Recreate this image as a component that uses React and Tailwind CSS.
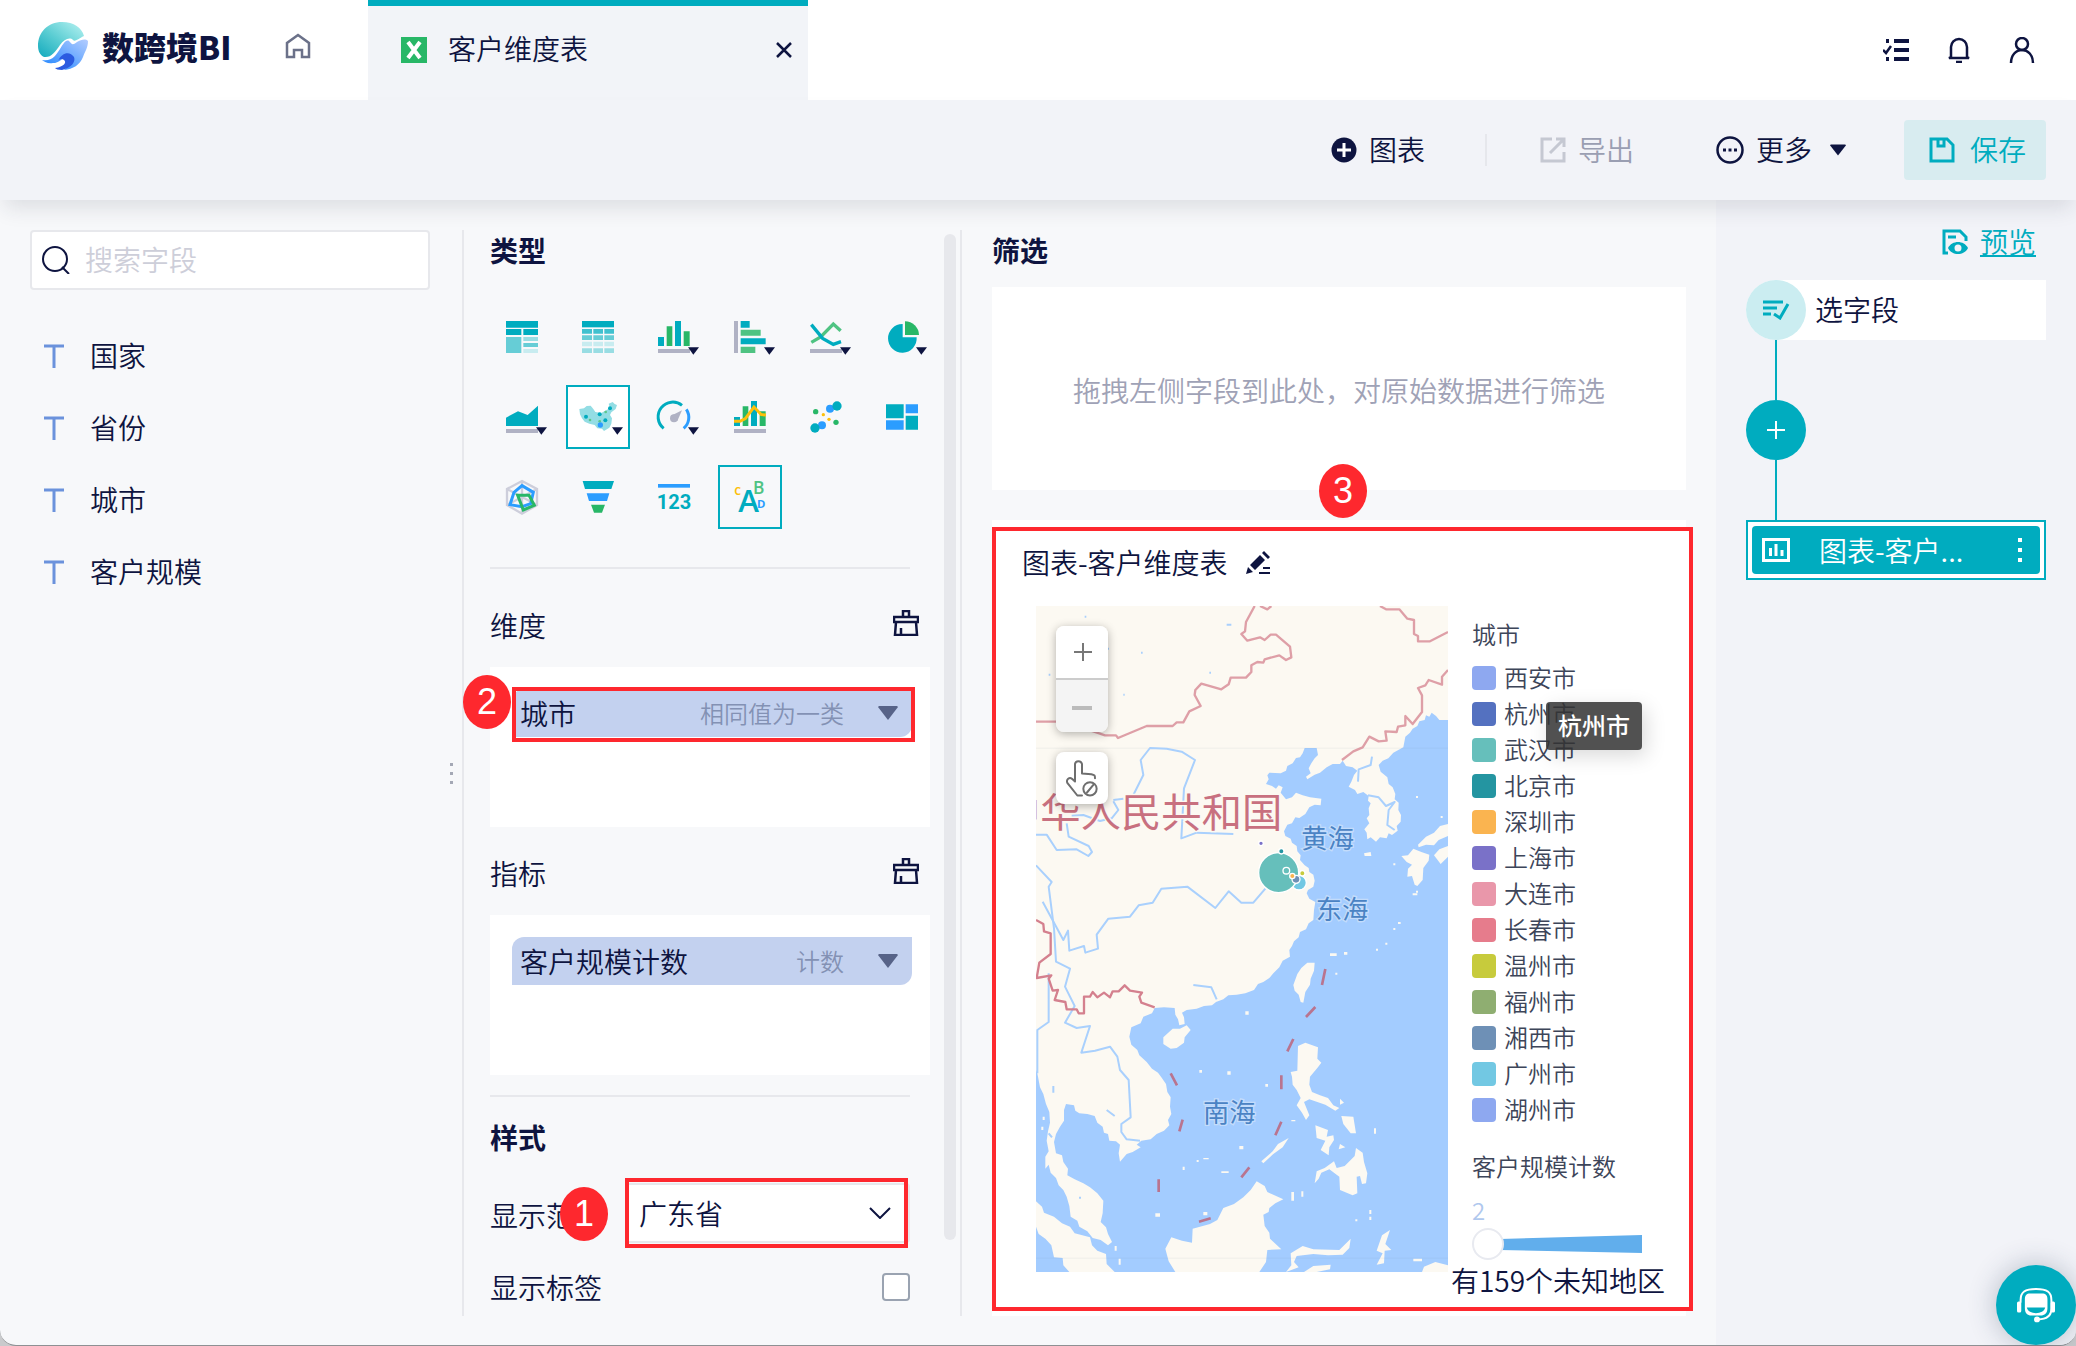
import { useState } from 'react'

const TEAL = '#00acbf'
const GREEN = '#28b767'
const BLUE = '#2b9dff'
const YELLOW = '#fdbf0a'
const GRAY = '#b0b2c4'

const FIELDS = ['国家', '省份', '城市', '客户规模']

const LEGEND = [
  { name: '西安市', color: '#8ea8f0' },
  { name: '杭州市', color: '#5471c0' },
  { name: '武汉市', color: '#66bfbb' },
  { name: '北京市', color: '#2495a1' },
  { name: '深圳市', color: '#fab450' },
  { name: '上海市', color: '#7a71c8' },
  { name: '大连市', color: '#e997aa' },
  { name: '长春市', color: '#e67c8c' },
  { name: '温州市', color: '#c7cb3c' },
  { name: '福州市', color: '#8fae71' },
  { name: '湘西市', color: '#6e90b6' },
  { name: '广州市', color: '#72c8e3' },
  { name: '湖州市', color: '#8ea8f0' },
]

const CHARTS = [
  {
    label: '交叉表',
    icon: (
      <>
        <path fill={TEAL} d="M0 0h96v20H0zM0 24h46v18H0zM52 24h44v18H52z" />
        <path fill="#66cdd6" d="M0 48h46v48H0zM52 66h44v12H52z" />
        <path fill="#99dde3" d="M52 48h44v12H52z" />
        <path fill="#c8ecf0" d="M52 84h44v12H52z" />
      </>
    ),
  },
  {
    label: '明细表',
    icon: (
      <>
        <path fill={TEAL} d="M0 0h96v19H0z" />
        <path fill="#40c1cf" d="M0 24h30v14H0zM34 24h29v14H34zM67 24h29v14H67z" />
        <path fill="#66cdd6" d="M0 43h30v14H0zM34 43h29v14H34zM67 43h29v14H67z" />
        <path fill="#c8ecf0" d="M0 62h30v14H0zM34 62h29v14H34zM67 62h29v14H67z" />
        <path fill="#99dde3" d="M0 82h30v14H0zM34 82h29v14H34zM67 82h29v14H67z" />
      </>
    ),
  },
  {
    label: '柱状图',
    more: true,
    icon: (
      <>
        <path fill={TEAL} d="M0 48h18v27H0zM51 0h18v75H51z" />
        <path fill={GREEN} d="M26 16h17v59H26zM77 31h18v44H77z" />
        <path fill={GRAY} d="M0 84h96v12H0z" />
      </>
    ),
  },
  {
    label: '条形图',
    more: true,
    icon: (
      <>
        <path fill={GRAY} d="M0 0h12v96H0z" />
        <path fill={TEAL} d="M20 0h27v20H20zM20 52h75v18H20z" />
        <path fill="#4fc382" d="M20 26h60v18H20zM20 77h44v19H20z" />
      </>
    ),
  },
  {
    label: '折线图',
    more: true,
    icon: (
      <>
        <path fill="none" stroke="#4fc382" strokeWidth="10" d="M4 64L32 48L70 9L92 29" />
        <path fill="none" stroke={TEAL} strokeWidth="10" d="M4 11L38 52L70 70L93 62" />
        <path fill={GRAY} d="M0 84h96v12H0z" />
      </>
    ),
  },
  {
    label: '饼图',
    more: true,
    icon: (
      <>
        <path fill={TEAL} d="M50 9V49H92A43 43 0 1 1 50 9Z" />
        <path fill={GREEN} d="M57 1A42 42 0 0 1 99 42H57Z" />
      </>
    ),
  },
  {
    label: '面积图',
    more: true,
    icon: (
      <>
        <path fill={TEAL} d="M0 50L36 31L65 42L96 14V75H0Z" />
        <path fill={GRAY} d="M0 84h96v12H0z" />
      </>
    ),
  },
  {
    label: '地图',
    more: true,
    active: true,
    filled: true,
    icon: (
      <>
        <path fill="#93dde4" d="M-8 24L6 22L14 15L26 14L34 24L40 33L58 36L72 28L84 22L80 8L92 3L98 9L105 12L101 24L88 34L84 42L90 52L88 68L82 80L66 90L60 83L46 82L38 72L22 68L8 62L0 52L-6 40Z" />
        <g fill={TEAL}>
          <circle cx="12" cy="47" r="6" />
          <circle cx="53" cy="40" r="6" />
          <circle cx="84" cy="22" r="6" />
          <circle cx="70" cy="58" r="6" />
        </g>
        <g fill="#5cc68b">
          <circle cx="24" cy="57" r="4" />
          <circle cx="71" cy="33" r="4" />
          <circle cx="53" cy="61" r="4" />
        </g>
        <circle cx="55" cy="72" r="8" fill={BLUE} />
      </>
    ),
  },
  {
    label: '仪表盘',
    more: true,
    icon: (
      <>
        <path fill="none" stroke={TEAL} strokeWidth="9" d="M17 82A43 43 0 0 1 72 13" />
        <path fill="none" stroke={BLUE} strokeWidth="9" d="M85 25A43 43 0 0 1 77 82" />
        <circle cx="48" cy="52" r="12" fill={GRAY} />
        <path fill={GRAY} d="M38 45L72 28L58 60Z" />
      </>
    ),
  },
  {
    label: '组合图',
    icon: (
      <>
        <path fill={TEAL} d="M0 48h18v27H0zM51 0h18v75H51z" />
        <path fill={GREEN} d="M26 16h17v59H26zM77 31h18v44H77z" />
        <path fill="none" stroke={YELLOW} strokeWidth="9" d="M0 61L18 61L34 53L60 18L82 41L96 42" />
        <path fill={GRAY} d="M0 84h96v12H0z" />
      </>
    ),
  },
  {
    label: '散点图',
    icon: (
      <>
        <circle cx="17" cy="32" r="8" fill={GREEN} />
        <circle cx="78" cy="64" r="8" fill={GREEN} />
        <circle cx="40" cy="41" r="5" fill={YELLOW} />
        <circle cx="57" cy="55" r="5" fill={YELLOW} />
        <circle cx="60" cy="23" r="12" fill={BLUE} />
        <circle cx="36" cy="73" r="12" fill={BLUE} />
        <circle cx="81" cy="15" r="14" fill={TEAL} />
        <circle cx="15" cy="81" r="14" fill={TEAL} />
      </>
    ),
  },
  {
    label: '矩形树图',
    icon: (
      <>
        <path fill={TEAL} d="M0 10h53v42H0zM59 44h37v42H59z" />
        <path fill={BLUE} d="M59 10h37v27H59zM0 58h53v28H0z" />
      </>
    ),
  },
  {
    label: '雷达图',
    icon: (
      <>
        <path fill="none" stroke="#cdcedb" strokeWidth="7" d="M48 0L93 24V72L48 98L3 72V24ZM48 0V98M3 24L93 72M93 24L3 72" />
        <path fill="none" stroke={BLUE} strokeWidth="9" d="M48 14L82 34L74 68L48 77L12 71L24 34Z" />
        <path fill="none" stroke={GREEN} strokeWidth="9" d="M35 43H69L85 73L52 87Z" />
      </>
    ),
  },
  {
    label: '漏斗图',
    icon: (
      <>
        <path fill={TEAL} d="M2 0H96L88 24H9Z" />
        <path fill={BLUE} d="M14 37H82L75 60H21Z" />
        <path fill={GREEN} d="M27 71H69L60 95H36Z" />
      </>
    ),
  },
  {
    label: '指标卡',
    icon: (
      <>
        <path fill={BLUE} d="M0 9h96v11H0z" />
        <text x="48" y="84" textAnchor="middle" fill={TEAL} fontSize="60" fontWeight="700" className="font-[Roboto,sans-serif]">123</text>
      </>
    ),
  },
  {
    label: '词云',
    active: true,
    icon: (
      <>
        <text x="1" y="41" fill={YELLOW} fontSize="32" fontWeight="700" className="font-['Open_Sans',sans-serif]">C</text>
        <text x="13" y="94" fill={TEAL} fontSize="94" fontWeight="600" className="font-['Open_Sans',sans-serif]">A</text>
        <text x="57" y="40" fill="#4fc382" fontSize="52" fontWeight="600" className="font-['Open_Sans',sans-serif]">B</text>
        <text x="69" y="80" fill={BLUE} fontSize="34" fontWeight="700" className="font-['Open_Sans',sans-serif]">D</text>
      </>
    ),
  },
]

function Logo() {
  return (
    <svg viewBox="0 0 50 50" className="size-[50px]" aria-hidden="true">
      <defs>
        <linearGradient id="sky" x1="0" y1="1" x2="1" y2="0">
          <stop offset="0" stopColor="#12a9bd" />
          <stop offset="0.45" stopColor="#58ccd2" />
          <stop offset="1" stopColor="#b9f3f2" />
        </linearGradient>
        <linearGradient id="wave" x1="0" y1="1" x2="1" y2="0">
          <stop offset="0" stopColor="#1b83ff" />
          <stop offset="1" stopColor="#b4cdff" />
        </linearGradient>
      </defs>
      <path fill="url(#sky)" d="M24 1C36 1 44 7 46 15C40 18 37 21 35 19C32 16 26 18 22 24C17 31 13 37 6 36C2 34 0 30 0 25C0 11 10 1 24 1Z" />
      <path fill="url(#wave)" d="M4 39C14 41 18 34 22 28C25 23 28 18 31 20C34 23 34 25 39 21C43 19 47 17 50 20C50 27 47 30 45 36C42 44 35 48 26 49C32 44 33 39 29 37C25 35 22 42 15 42C10 43 7 41 4 39Z" />
      <path fill="#2b5be0" d="M20 40C24 31 32 30 36 36C38 41 33 47 24 49C20 49 18 48 17 47C26 46 29 41 26 39C24 37 21 38 20 40Z" />
    </svg>
  )
}

function Badge({ children, className }) {
  return (
    <span className={`absolute z-20 flex h-[54px] w-12 items-center justify-center rounded-[50%] bg-[#fe282e] font-['Liberation_Sans',Arial,sans-serif] text-4xl font-normal text-white ${className}`}>
      {children}
    </span>
  )
}

function BrushIcon() {
  return (
    <svg viewBox="0 0 26 26" className="size-[26px]" fill="none" stroke="#0e1440" strokeWidth="2.500" aria-hidden="true">
      <path d="M10 7V1H16V7M1 7H25V12H1ZM3 12L2 25H24L23 12M8 25V18" />
    </svg>
  )
}

function Triangle({ className }) {
  return (
    <svg viewBox="0 0 20 14" className={className} fill="currentColor" aria-hidden="true">
      <path d="M1 0H19L20 1L10 14L0 1Z" />
    </svg>
  )
}

function FieldChip({ name, mode }) {
  return (
    <button className="flex h-12 w-full items-center rounded-tl-xl rounded-br-xl bg-[#c3d1ef] pl-2 pr-3.5 text-left">
      <span className="flex-1">{name}</span>
      <span className="mr-[34px] text-2xl text-[#8391b4]">{mode}</span>
      <Triangle className="h-3.5 w-5 text-[#576388]" />
    </button>
  )
}

function DropZone({ title, children }) {
  return (
    <section className="pr-[30px]">
      <div className="flex h-10 items-center justify-between pr-[11px]">
        <h3>{title}</h3>
        <button className="pb-1" aria-label={`清空${title}`}><BrushIcon /></button>
      </div>
      <div className="mt-[22px] h-40 bg-white px-[18px] pt-[22px] pl-[22px]">{children}</div>
    </section>
  )
}

function MapView() {
  return (
    <svg viewBox="168 288 1236 1998" preserveAspectRatio="xMidYMid slice" className="h-full w-full" role="img" aria-label="城市地图">
      <rect x="168" y="288" width="1236" height="1998" fill="#a3ccff" />
      <g fill="#fcf9f2">
        {/* mainland */}
        <path d="M168 288H1404V630L1378 630L1368 618L1355 608L1348 620L1338 616L1334 630L1318 634L1312 648L1298 656L1290 668L1276 680L1270 712L1240 728L1225 745L1208 752L1196 765L1202 785L1222 802L1226 822L1238 832L1246 852L1244 868L1256 878L1255 900L1263 915L1262 935L1250 948L1253 962L1236 975L1226 970L1220 985L1200 982L1188 995L1172 982L1162 988L1160 968L1153 958L1168 940L1160 925L1168 915L1166 895L1172 880L1164 872L1166 858L1150 846L1132 852L1125 840L1106 830L1114 815L1122 795L1132 782L1118 772L1098 768L1088 752L1080 762L1058 762L1040 772L1020 788L1004 794L982 808L978 800L992 790L986 775L994 760L1004 745L1014 735L1010 714H974L968 730L960 742L948 744L938 760L922 768L918 782L902 790L868 788L862 796L866 808L858 822L876 828L888 836L896 826L908 832L902 848L918 868L936 862L948 848L968 856L990 862L1024 866L1022 886L1004 884L988 892L976 912L958 924L946 922L936 940L922 944L912 964L916 978L932 986L936 998L950 1008L952 1024L962 1036L960 1050L974 1066L986 1074L988 1086L1000 1094L1004 1112L1000 1130L984 1140L980 1150L988 1166L1006 1176L1002 1200L1000 1230L986 1240L978 1258L960 1266L956 1282L942 1294L936 1308L928 1320L930 1340L908 1352L898 1372L880 1390L868 1404L850 1416L834 1422L822 1440L796 1450L770 1454L745 1456L730 1468L708 1476L696 1486L672 1488L650 1496L620 1500L606 1508L612 1522L614 1542L598 1546L594 1528L586 1514L584 1494L552 1492L524 1494L516 1510L490 1520L482 1540L454 1552L448 1580L454 1604L472 1620L478 1636L500 1656L516 1676L534 1688L544 1702L558 1722L562 1746L572 1762L570 1790L574 1812L564 1830L568 1846L552 1862L530 1872L512 1888L484 1892L470 1904L482 1912L458 1926L440 1932L420 1955L416 1930L420 1904L408 1894L388 1892L384 1872L372 1868L368 1850L352 1838L344 1818L322 1812L298 1810L286 1802L282 1786L258 1782L252 1800L252 1832L240 1850L228 1872L222 1896L228 1930L246 1936L250 1956L264 1976L262 1996L284 2008L310 2020L330 2032L352 2050L370 2072L368 2110L362 2136L378 2152L384 2172L396 2196L384 2206L362 2190L338 2184L322 2164L298 2150L292 2132L272 2120L268 2088L260 2060L250 2040L236 2026L228 2004L212 1988L206 1964L196 1976L196 1940L206 1924L200 1892L204 1864L210 1838L208 1806L198 1782L190 1752L180 1732L172 1690L168 1680Z" />
        {/* Hainan, Taiwan, Jeju */}
        <path d="M550 1582L578 1556L600 1556L620 1546L632 1560L614 1582L612 1598L590 1614L572 1616L550 1602Z" />
        <path d="M940 1425L952 1392L964 1374L982 1358L1004 1358L1002 1382L992 1406L990 1424L976 1446L970 1478L962 1476L956 1454L944 1442Z" />
        <path d="M1152 1030L1172 1026L1174 1038L1154 1038Z" />
        {/* Japan */}
        <path d="M1264 1038L1284 1036L1300 1016L1324 1026L1348 1034L1346 1052L1330 1074L1328 1110L1312 1128L1304 1124L1296 1098L1282 1100L1284 1076L1296 1064L1280 1056Z" />
        <path d="M1314 1004L1338 980L1362 968L1380 948L1404 942V978L1376 990L1362 1006L1338 1004L1316 1012Z" />
        <path d="M1362 1036L1378 1018L1404 1008V1040L1382 1062Z" />
        {/* Philippines */}
        <path d="M954 1608L976 1598L1014 1612L1012 1646L1024 1658L1012 1674L1000 1688L990 1700L988 1724L996 1746L1020 1756L1044 1764L1060 1786L1078 1794L1066 1802L1036 1784L1012 1776L988 1768L972 1776L988 1816L978 1830L966 1808L950 1786L962 1764L950 1740L938 1724L936 1700L932 1686L952 1682Z" />
        <path d="M1006 1846L1044 1860L1040 1880L1060 1876L1062 1890L1048 1912L1046 1936L1022 1920L1036 1892L1010 1884Z" />
        <path d="M1084 1818L1120 1820L1128 1870L1112 1870L1090 1842Z" />
        <path d="M1080 1902L1096 1912L1076 1918ZM1080 1766L1092 1778L1080 1784Z" />
        <path d="M1004 2020L1010 1984L1034 1974L1062 1954L1070 1974L1094 1968L1124 1938L1128 1914L1148 1928L1152 1956L1162 1990L1158 2020L1146 2022L1140 1998L1130 2000L1132 2050L1118 2056L1080 2040L1078 2000L1048 1978L1024 1988L1016 2006Z" />
        <path d="M844 1954L878 1924L894 1902L926 1884L908 1912L880 1932L850 1960Z" />
        {/* Sumatra, Borneo, Sulawesi and the islands around */}
        <path d="M168 2074L186 2090L192 2108L222 2120L246 2140L270 2150L284 2170L330 2182L336 2206L352 2222L378 2232L380 2262L404 2286H268L250 2266L248 2244L222 2242L214 2206L196 2186L176 2172L168 2150Z" />
        <path d="M638 2156L690 2142L712 2130L730 2094L762 2082L790 2062L812 2040L830 2014L854 2028L862 2046L910 2068L886 2080L868 2094L866 2106L850 2114L854 2148L868 2168L870 2186L904 2218L862 2220L858 2256L838 2286H586L566 2254L556 2216L574 2182L606 2192L636 2198Z" />
        <path d="M918 2286L934 2266L932 2230L968 2208L1000 2218L1078 2220L1112 2186L1108 2214L1088 2234L1044 2236L1000 2232L950 2238L942 2256L956 2272Z" />
        <path d="M972 2286L1000 2268L1052 2264L1050 2278L1010 2286ZM1326 2286L1332 2270L1366 2256L1404 2266V2286ZM1300 2246H1326V2254H1300Z" />
        <path d="M1230 2160L1206 2176L1190 2222L1208 2230L1190 2264L1212 2260L1214 2222L1234 2220L1216 2202Z" />
        <path d="M1050 1330h20v8h-20zM1092 1326h10v8h-10zM1188 1316h6v6h-6zM1216 1298h6v6h-6zM1240 1254h6v6h-6zM1254 1236h8v6h-8zM1066 1388h6v6h-6zM796 1504h10v10h-10zM742 1684h10v10h-10zM658 1680h8v8h-8zM856 1722h8v8h-8zM778 1908h12v10h-12zM724 1984h22v5h-22zM650 1950h6v6h-6zM670 1944h16v4h-16zM526 2110h14v10h-14zM670 2106h12v10h-12zM934 2046h8v26h-8zM964 2044h6v16h-6zM1168 2100h6v12h-6zM1168 2120h6v10h-6zM608 1970h6v10h-6zM404 2208h6v14h-6zM416 2246h6v18h-6zM1126 2128h6v6h-6zM934 1830h12v4h-12zM1240 1060h6v6h-6zM1298 1150h14v6h-14zM1308 1142h6v6h-6zM1382 918h6v6h-6zM1308 858h6v6h-6zM1182 1855h6v16h-6zM188 1820h6v10h-6zM184 1850h6v10h-6z" />
      </g>
      <path d="M168 714.500H1404M168 2244.500H1404" stroke="#7b8ba0" strokeOpacity="0.15" strokeWidth="2" />

      {/* rivers and lakes */}
      <g fill="none" stroke="#a9d0fd" strokeWidth="6" strokeLinejoin="round">
        <path d="M460 855L490 795L482 750L510 714L560 716L605 725L645 750L612 835L604 985L650 968L760 972" />
        <path d="M168 974H200L230 1020L290 1018L325 1038L336 1026L326 1008L266 980L260 940M400 870L430 866M400 874L415 900L395 925L360 933L310 915L275 917" />
        <path d="M168 1066L215 1116L206 1130L222 1255L228 1355L270 1376L255 1430L284 1488L255 1538L290 1554L330 1548L304 1628L345 1622L390 1610L412 1640L420 1680L446 1710L452 1822L424 1842L424 1866L440 1888L480 1892" />
        <path d="M188 1175L250 1290L264 1262L268 1322L312 1308L316 1328L354 1316L350 1274L385 1226L450 1220L476 1186L518 1178L544 1136L622 1130L706 1194L746 1144L784 1178H820L856 1136" />
        <path d="M206 1390V1536L172 1560V1690M640 1425L694 1432L710 1468M1134 815L1136 778L1172 765L1176 740M1164 856L1196 862L1218 888L1244 876L1226 900L1222 945L1244 960" />
        <path d="M740 344h14M314 320h5M483 428h5M688 488h5M206 494h5M430 554h4M384 416h3M220 1728v20M380 1800l24 18M206 1870l10 12M300 2060v6" />
      </g>

      {/* borders */}
      <g fill="none" stroke="#d4808e" strokeWidth="7" strokeLinejoin="round">
        <path strokeOpacity="0.75" d="M168 635H240L340 664L375 676H408L414 684L500 648H578L590 637H610L628 604L662 588L644 555L646 540L664 521L724 538L746 523L752 503H798L814 486V466L832 456L850 458L854 448L898 436L918 450L934 442L930 410L888 374H872L854 390L840 382L802 392L784 372L795 364L798 336L824 288" />
        <path strokeOpacity="0.75" d="M840 288L862 298L874 288M1200 288L1218 298H1258L1282 326L1302 330V372L1314 378V394H1350L1404 366M1404 480L1386 500V524L1346 510L1336 526L1314 534L1326 556V606L1298 642L1276 618V646L1254 650L1250 666L1216 664L1220 692L1196 694L1168 680L1148 712L1120 724L1086 750" />
        <path d="M168 1230L190 1242L192 1264L212 1270V1332L178 1358L170 1404L214 1396L206 1406L218 1442L234 1440L224 1470L256 1476L260 1498H290L296 1510H312V1460H330L338 1446L352 1462L372 1448L390 1462L398 1444H416L434 1426L450 1442L486 1448L478 1460L484 1478L524 1492" />
      </g>
      <g stroke="#b9748f" strokeWidth="8">
        <path d="M1036 1377L1026 1425M1006 1491L978 1521M940 1587L922 1624M904 1696V1738M904 1835L886 1876M808 1972L784 2002M692 2125L657 2135M572 1690L591 1726M608 1829L598 1864M536 2008V2046" />
      </g>

      {/* place names */}
      <g className="font-['Noto_Sans_CJK_SC',sans-serif] font-normal" paintOrder="stroke" strokeWidth="8">
        <text x="60" y="951" fontSize="121" fill="#c8707f" stroke="#fcf9f2">中华人民共和国</text>
        <g fontSize="79" fill="#4a83c4" stroke="#c3dcfb">
          <text x="964" y="1015">黄海</text>
          <text x="1007" y="1227">东海</text>
          <text x="669" y="1835">南海</text>
        </g>
      </g>

      {/* city bubbles */}
      <g stroke="#fff" strokeWidth="4">
        <circle cx="957" cy="1118" r="22" fill="#72c8e3" />
        <circle cx="896" cy="1088" r="60" fill="#66bfbb" />
        <circle cx="919" cy="1082" r="10" fill="#66bfbb" />
        <circle cx="948" cy="1108" r="12" fill="#6e90b6" />
        <circle cx="937" cy="1098" r="8" fill="#fab450" />
        <circle cx="904" cy="1024" r="8" fill="#2495a1" />
        <circle cx="843" cy="1000" r="7" fill="#7a71c8" />
        <circle cx="967" cy="1090" r="8" fill="#c7cb3c" />
      </g>
    </svg>
  )
}

function Header() {
  return (
    <header className="flex h-[100px] items-center bg-white">
      <div className="flex w-[368px] items-center pb-2 pl-[38px]">
        <Logo />
        <span className="ml-3.5 text-[32px] leading-10 font-black">数跨境BI</span>
        <button className="ml-auto mr-[57px]" aria-label="首页">
          <svg viewBox="0 0 26 26" className="size-[26px]" fill="none" stroke="#6b7189" strokeWidth="2.500" aria-hidden="true">
            <path d="M2 24V10L13 2L24 10V24H17V17H9V24Z" />
          </svg>
        </button>
      </div>
      <div className="flex h-full w-[440px] items-center border-t-[6px] border-[#00acbf] bg-[#f2f4f8] pb-1.5 pr-4 pl-[33px]">
        <svg viewBox="0 0 26 26" className="size-[26px]" aria-hidden="true">
          <path fill="#28b767" d="M0 0H26V26H0Z" />
          <path fill="none" stroke="#fff" strokeWidth="4" d="M7 5L19 21M19 5L7 21" />
        </svg>
        <span className="ml-[21px] flex-1 pb-1">客户维度表</span>
        <button aria-label="关闭">
          <svg viewBox="0 0 16 16" className="size-4" fill="none" stroke="#0e1440" strokeWidth="2.500" aria-hidden="true">
            <path d="M1 1L15 15M15 1L1 15" />
          </svg>
        </button>
      </div>
      <nav className="ml-auto flex items-center gap-[38px] pr-[41px]">
        <button aria-label="任务">
          <svg viewBox="0 0 26 26" className="size-[26px]" fill="none" stroke="#0e1440" aria-hidden="true">
            <path strokeWidth="4" d="M11 4H26M11 13H26M11 22H26M3 4H6M3 22H6" />
            <path strokeWidth="2.500" d="M0 13L3 16L8 9" />
          </svg>
        </button>
        <button aria-label="通知">
          <svg viewBox="0 0 24 26" className="h-[26px] w-6" fill="none" stroke="#0e1440" strokeWidth="2.500" aria-hidden="true">
            <path d="M4 20V10A8 8 0 0 1 20 10V20L22 21H2ZM9 25H15" />
          </svg>
        </button>
        <button aria-label="我的">
          <svg viewBox="0 0 26 26" className="size-[26px]" fill="none" stroke="#0e1440" strokeWidth="2.500" aria-hidden="true">
            <circle cx="13" cy="7" r="6" />
            <path d="M2 26C2 18 7 13 13 13S24 18 24 26" />
          </svg>
        </button>
      </nav>
    </header>
  )
}

function Toolbar() {
  return (
    <div className="relative z-10 flex h-[100px] items-center justify-end bg-[#f2f3f8] pr-[30px] shadow-[0_12px_20px_-4px_rgba(30,40,60,0.12)]">
      <button className="flex items-center gap-3">
        <svg viewBox="0 0 26 26" className="size-[26px]" aria-hidden="true">
          <circle cx="13" cy="13" r="12.500" fill="#0e1440" />
          <path stroke="#fff" strokeWidth="3" d="M13 6V20M6 13H20" />
        </svg>
        <span className="pb-0.5">图表</span>
      </button>
      <span className="mr-[53px] ml-[60px] h-8 w-0.5 bg-[#e6e7ec]" />
      <button className="flex items-center gap-3 text-[#9a9eb2]" disabled>
        <svg viewBox="0 0 26 26" className="size-[26px]" fill="none" stroke="#c5c8d2" strokeWidth="3" aria-hidden="true">
          <path d="M12 2H2V24H24V15M16 2H24V10M24 2L10 16" />
        </svg>
        <span className="pb-0.5">导出</span>
      </button>
      <button className="ml-[82px] flex items-center gap-3">
        <svg viewBox="0 0 28 28" className="size-7" aria-hidden="true">
          <circle cx="14" cy="14" r="12.500" fill="none" stroke="#0e1440" strokeWidth="2.500" />
          <path fill="#0e1440" d="M7 12.500h3v3H7zM12.500 12.500h3v3h-3zM18 12.500h3v3h-3z" />
        </svg>
        <span className="pb-0.5">更多</span>
        <Triangle className="ml-1.5 h-3 w-4" />
      </button>
      <button className="ml-[58px] flex h-[60px] items-center gap-[15px] rounded bg-[#d8ecf0] px-5 pl-[25px] text-[#00acbf]">
        <svg viewBox="0 0 26 26" className="size-[26px]" fill="none" stroke={TEAL} strokeWidth="3" aria-hidden="true">
          <path d="M2 2H18L24 8V24H2ZM9 2V9H15V2" />
        </svg>
        <span className="pb-0.5">保存</span>
      </button>
    </div>
  )
}

export default function App() {
  const [keyword, setKeyword] = useState('')
  const [showLabel, setShowLabel] = useState(false)

  return (
    <div className="bg-[#c9cacc]">
      <div className="flex min-h-screen flex-col overflow-hidden rounded-b-2xl border-b border-[#8e9093] bg-[#f7f8fa] font-['Noto_Sans_CJK_SC',sans-serif] text-[28px] leading-10 font-[350] text-[#0e1440]">
        <Header />
        <Toolbar />

        <main className="flex flex-1">
          {/* fields */}
          <aside className="mt-[30px] mb-[29px] flex shrink-0 border-r-2 border-[#e7e8ec] pl-[30px]">
            <div className="w-[400px]">
              <label className="flex h-[60px] items-center rounded border-2 border-[#e7e8ec] bg-white px-2.5">
                <svg viewBox="0 0 28 28" className="size-7 shrink-0" fill="none" stroke="#0e1440" strokeWidth="2" aria-hidden="true">
                  <circle cx="13" cy="13" r="12" />
                  <path d="M20 21L27 28" />
                </svg>
                <input value={keyword} onChange={e => setKeyword(e.target.value)} placeholder="搜索字段" aria-label="搜索字段"
                  className="ml-[15px] min-w-0 flex-1 pb-0.5 outline-none placeholder:text-[#cdced9]" />
              </label>
              <ul className="mt-[30px]">
                {FIELDS.map(f => (
                  <li key={f} className="flex h-[72px] items-center pl-3.5">
                    <svg viewBox="0 0 20 24" className="mr-[26px] h-6 w-5" fill="none" stroke="#6b92dc" strokeWidth="3" aria-hidden="true">
                      <path d="M0 2H20M10 2V24" />
                    </svg>
                    <span className="pb-0.5">{f}</span>
                  </li>
                ))}
              </ul>
            </div>
            <div className="flex w-8 flex-col items-end justify-center gap-1.5 pr-[9px]" aria-hidden="true">
              <span className="size-[3px] bg-[#a4a8b5]" />
              <span className="size-[3px] bg-[#a4a8b5]" />
              <span className="size-[3px] bg-[#a4a8b5]" />
            </div>
          </aside>

          {/* chart settings */}
          <section className="mt-[30px] mb-[29px] flex w-[498px] shrink-0 border-r-2 border-[#e7e8ec] pl-[26px]">
            <div className="w-[470px]">
              <h2 className="font-bold">类型</h2>
              <div className="mt-[35px] grid w-[444px] grid-cols-6 gap-x-3 gap-y-4">
                {CHARTS.map(c => (
                  <button key={c.label} aria-label={c.label}
                    className={`flex size-16 items-center justify-center border-2 ${c.active ? 'border-[#00acbf]' : 'border-transparent'} ${c.filled ? 'bg-white' : ''}`}>
                    <svg viewBox="0 0 96 96" className="size-8 overflow-visible" aria-hidden="true">
                      {c.icon}
                      {c.more && <path fill="#0e1440" d="M90 79H123L106 101Z" />}
                    </svg>
                  </button>
                ))}
              </div>
              <hr className="mt-[38px] mb-9 w-[420px] border-t-2 border-[#e7e8ec]" />

              <DropZone title="维度">
                <div className="relative">
                  <FieldChip name="城市" mode="相同值为一类" />
                  <span className="pointer-events-none absolute -top-0.5 -right-[3px] -bottom-[5px] left-0 border-4 border-[#fe282e]" />
                  <Badge className="-top-3.5 right-[401px]">2</Badge>
                </div>
              </DropZone>
              <div className="h-[26px]" />
              <DropZone title="指标">
                <FieldChip name="客户规模计数" mode="计数" />
              </DropZone>

              <hr className="my-5 w-[420px] border-t-2 border-[#e7e8ec]" />
              <h2 className="font-bold">样式</h2>
              <div className="relative mt-[26px] flex h-[60px] w-[420px] items-center justify-between">
                <label htmlFor="range" className="pt-1">显示范围</label>
                <div className="relative w-[285px]">
                  <select id="range" className="h-[60px] w-full appearance-none rounded border-2 border-[#e7e8ec] bg-white px-3">
                    <option>广东省</option>
                    <option>湖北省</option>
                  </select>
                  <svg viewBox="0 0 22 12" className="pointer-events-none absolute top-6 right-[19px] h-3 w-[22px]" fill="none" stroke="#0e1440" strokeWidth="2" aria-hidden="true">
                    <path d="M1 1L11 11L21 1" />
                  </svg>
                  <span className="pointer-events-none absolute -top-[5px] right-0.5 -bottom-[5px] left-0 border-4 border-[#fe282e]" />
                </div>
                <Badge className="top-1 left-[70px]">1</Badge>
              </div>
              <div className="mt-6 flex h-10 w-[420px] items-center justify-between">
                <label htmlFor="labels">显示标签</label>
                <input id="labels" type="checkbox" checked={showLabel} onChange={e => setShowLabel(e.target.checked)}
                  className="size-7 appearance-none rounded border-2 border-[#9aa3b1] bg-white checked:bg-[#00acbf]" />
              </div>
            </div>
          </section>
          <div className="-ml-[18px] mt-[34px] mr-[6px] h-[1006px] w-3 shrink-0 rounded-full bg-[#e7e8ec]" />

          {/* canvas */}
          <section className="mt-[30px] mb-[29px] flex min-w-0 flex-1 flex-col px-[30px]">
            <h2 className="font-bold">筛选</h2>
            <div className="relative mt-[17px] flex h-[203px] items-center justify-center bg-white pt-0.5 text-[#9fa2b6]">
              拖拽左侧字段到此处，对原始数据进行筛选
              <Badge className="top-[177px] left-[327px]">3</Badge>
            </div>
            <div className="relative mt-[30px] flex-1 bg-white">
              <div className="absolute top-[7px] -right-[7px] bottom-[5px] left-0 border-4 border-[#fe282e] bg-white" />
              <div className="relative">
                <div className="flex h-[86px] items-center gap-[18px] pl-[30px]">
                  <h3 className="pb-0.5">图表-客户维度表</h3>
                  <button aria-label="重命名">
                    <svg viewBox="0 0 24 24" className="size-6" fill="#0e1440" aria-hidden="true">
                      <path d="M4 14L14 4L19 9L9 19ZM16 2L18 0L24 6L22 8ZM2 16L7 21L0 23ZM17 16H24V18H17ZM13 21H24V23H13Z" />
                    </svg>
                  </button>
                </div>
                <div className="flex pl-11">
                  <div className="relative h-[666px] min-w-0 flex-1">
                    <MapView />
                    <div className="absolute top-5 left-5 flex w-[52px] flex-col rounded-lg shadow-[0_2px_10px_rgba(0,0,0,0.3)]">
                      <button className="flex h-[54px] items-center justify-center rounded-t-lg border-b-2 border-[#ccc] bg-white" aria-label="放大">
                        <svg viewBox="0 0 18 18" className="ml-0.5 size-[18px]" stroke="#777" strokeWidth="2" aria-hidden="true"><path d="M9 0V18M0 9H18" /></svg>
                      </button>
                      <button className="flex h-[52px] items-center justify-center rounded-b-lg bg-[#f4f4f4] pt-1" aria-label="缩小">
                        <svg viewBox="0 0 20 18" className="h-[18px] w-5" stroke="#bbb" strokeWidth="4" aria-hidden="true"><path d="M0 9H20" /></svg>
                      </button>
                    </div>
                    <button className="absolute top-[146px] left-5 flex size-[52px] items-center justify-center rounded-lg bg-white shadow-[0_2px_10px_rgba(0,0,0,0.3)]" aria-label="禁用拖动">
                      <svg viewBox="0 0 96 110" className="h-[37px] w-8" fill="none" stroke="#6e6e6e" strokeWidth="6" strokeLinejoin="round" strokeLinecap="round" aria-hidden="true">
                        <path d="M48 106H34L4 68C0 58 10 50 18 56L27 64V12C28 0 46 0 48 12V40L76 42C86 44 87 46 87 54" />
                        <circle cx="72" cy="86" r="20" />
                        <path d="M63 97L82 74" />
                      </svg>
                    </button>
                  </div>

                  <div className="relative w-[238px] shrink-0 pt-2.5 pl-6 text-2xl leading-9 text-[#3d4559]">
                    <h4 className="mb-2">城市</h4>
                    <ul>
                      {LEGEND.map(l => (
                        <li key={l.name} className="flex h-9 items-center gap-2">
                          <span className="size-6 rounded-sm" style={{ background: l.color }} />
                          <span className="pb-0.5">{l.name}</span>
                        </li>
                      ))}
                    </ul>
                    <div className="absolute top-24 left-[98px] h-12 rounded bg-[#323232]/85 px-3 leading-[46px] font-medium text-white shadow-[4px_6px_20px_rgba(0,0,0,0.15)]">
                      杭州市
                    </div>
                    <h4 className="mt-5">客户规模计数</h4>
                    <p className="mt-2 text-[#b0c8ee]">2</p>
                    <svg viewBox="0 0 172 32" className="h-8 w-[172px]" aria-hidden="true">
                      <path fill="#61aeec" d="M28 11L170 7V25L28 22Z" />
                      <circle cx="16" cy="16" r="15" fill="#fff" stroke="#e8eaf0" strokeWidth="2" />
                    </svg>
                    <p className="mt-0.5 -ml-[21px] text-[28px] text-[#0e1440]">有159个未知地区</p>
                  </div>
                </div>
              </div>
            </div>
          </section>

          {/* steps */}
          <aside className="w-[360px] shrink-0 bg-[#f2f3f8] px-[30px] pt-[22px]">
            <a href="#preview" className="flex h-10 items-center justify-end gap-3 pr-2.5 text-[#00acbf] underline underline-offset-2">
              <svg viewBox="0 0 26 26" className="size-[26px]" fill="none" stroke={TEAL} strokeWidth="3" aria-hidden="true">
                <path d="M6 24H2V2H18L24 8V12M6 8H14" />
                <path fill={TEAL} fillRule="evenodd" stroke="none" d="M6 19C10 11 22 11 26 19C22 27 10 27 6 19ZM16 15.500A3.500 3.500 0 1 0 16 22.500A3.500 3.500 0 1 0 16 15.500Z" />
              </svg>
              <span className="pb-0.5">预览</span>
            </a>
            <div className="mt-[18px] flex flex-col">
              <button className="flex h-[60px] items-center gap-[9px] rounded-l-full rounded-r bg-white text-left">
                <span className="flex size-[60px] items-center justify-center rounded-full bg-[#cbedf1]">
                  <svg viewBox="0 0 28 20" className="h-5 w-7" fill="none" stroke={TEAL} strokeWidth="3" aria-hidden="true">
                    <path d="M1 2H21M1 8H15M1 14H9M12 14L18 18L26 4" />
                  </svg>
                </span>
                <span className="pb-0.5">选字段</span>
              </button>
              <span className="ml-[29px] h-[60px] w-0.5 bg-[#00acbf]" />
              <button className="flex size-[60px] items-center justify-center rounded-full bg-[#00acbf]" aria-label="添加步骤">
                <svg viewBox="0 0 18 18" className="size-[18px]" stroke="#fff" strokeWidth="2" aria-hidden="true"><path d="M9 0V18M0 9H18" /></svg>
              </button>
              <span className="ml-[29px] h-[60px] w-0.5 bg-[#00acbf]" />
              <div className="border-2 border-[#00acbf] bg-white p-1">
                <div className="flex h-12 items-center rounded bg-[#00acbf] pr-[17px] pl-2.5 text-white">
                  <svg viewBox="0 0 28 24" className="h-6 w-7" fill="none" stroke="#fff" strokeWidth="3" aria-hidden="true">
                    <path d="M1.500 1.500H26.500V22.500H1.500ZM8.500 10V18M14 6V18M20 12V18" />
                  </svg>
                  <span className="ml-[29px]">图表-客户...</span>
                  <button className="ml-auto" aria-label="更多操作">
                    <svg viewBox="0 0 6 24" className="h-6 w-1.5" fill="#fff" aria-hidden="true">
                      <path d="M1 0h4v4H1zM1 10h4v4H1zM1 20h4v4H1z" />
                    </svg>
                  </button>
                </div>
              </div>
            </div>
          </aside>
        </main>
      </div>

      <button className="fixed right-0 bottom-px z-30 flex size-20 items-center justify-center rounded-full bg-[#00acbf] shadow-[0_0_28px_rgba(40,60,90,0.3)]" aria-label="在线客服">
        <svg viewBox="0 0 116 106" className="h-9 w-[38px]" aria-hidden="true">
          <path fill="none" stroke="#fff" strokeWidth="6" d="M11 46V38C11 14 24 4 58 4S105 14 105 38V64C105 84 92 97 64 97" />
          <rect x="0" y="42" width="13" height="34" rx="5" fill="#fff" />
          <rect x="103" y="42" width="13" height="34" rx="5" fill="#fff" />
          <path fill="#fff" fillRule="evenodd" d="M40 18H76C88 18 93 24 93 36V62C93 78 84 85 72 85H44C32 85 24 78 24 62V36C24 24 29 18 40 18ZM30 61C34 84 82 84 86 61Z" />
          <circle cx="61" cy="97" r="9" fill="#fff" />
        </svg>
      </button>
    </div>
  )
}
